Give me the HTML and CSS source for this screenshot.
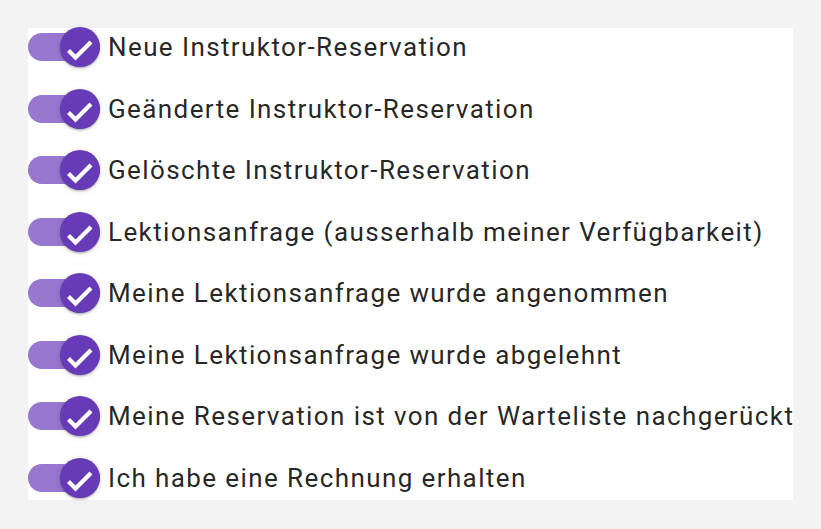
FILE: index.html
```
<!DOCTYPE html>
<html lang="de">
<head>
<meta charset="utf-8">
<link rel="stylesheet" href="styles.css">
</head>
<body>
<div class="panel">
  <div class="row"><span class="toggle"><span class="track"></span><span class="thumb"><svg viewBox="0 0 40 40"><polyline points="8.5,23.5 15.5,30.5 31,15"/></svg></span></span><span class="label">Neue Instruktor-Reservation</span></div>
  <div class="row"><span class="toggle"><span class="track"></span><span class="thumb"><svg viewBox="0 0 40 40"><polyline points="8.5,23.5 15.5,30.5 31,15"/></svg></span></span><span class="label">Geänderte Instruktor-Reservation</span></div>
  <div class="row"><span class="toggle"><span class="track"></span><span class="thumb"><svg viewBox="0 0 40 40"><polyline points="8.5,23.5 15.5,30.5 31,15"/></svg></span></span><span class="label">Gelöschte Instruktor-Reservation</span></div>
  <div class="row"><span class="toggle"><span class="track"></span><span class="thumb"><svg viewBox="0 0 40 40"><polyline points="8.5,23.5 15.5,30.5 31,15"/></svg></span></span><span class="label">Lektionsanfrage (ausserhalb meiner Verfügbarkeit)</span></div>
  <div class="row"><span class="toggle"><span class="track"></span><span class="thumb"><svg viewBox="0 0 40 40"><polyline points="8.5,23.5 15.5,30.5 31,15"/></svg></span></span><span class="label">Meine Lektionsanfrage wurde angenommen</span></div>
  <div class="row"><span class="toggle"><span class="track"></span><span class="thumb"><svg viewBox="0 0 40 40"><polyline points="8.5,23.5 15.5,30.5 31,15"/></svg></span></span><span class="label">Meine Lektionsanfrage wurde abgelehnt</span></div>
  <div class="row"><span class="toggle"><span class="track"></span><span class="thumb"><svg viewBox="0 0 40 40"><polyline points="8.5,23.5 15.5,30.5 31,15"/></svg></span></span><span class="label">Meine Reservation ist von der Warteliste nachgerückt</span></div>
  <div class="row"><span class="toggle"><span class="track"></span><span class="thumb"><svg viewBox="0 0 40 40"><polyline points="8.5,23.5 15.5,30.5 31,15"/></svg></span></span><span class="label">Ich habe eine Rechnung erhalten</span></div>
</div>
</body>
</html>
```
FILE: styles.css
```
html, body {
  margin: 0;
  padding: 0;
  background: #f3f3f3;
}
body {
  padding: 28px;
  font-family: Roboto, "Liberation Sans", sans-serif;
}
.panel {
  background: #ffffff;
  width: 765px;
  height: 472px;
  display: flex;
  flex-direction: column;
  gap: 21.57px;
  box-sizing: border-box;
}
.row {
  display: flex;
  align-items: center;
  height: 40px;
  flex: none;
}
.row:first-child {
  margin-top: -1px;
}
.toggle {
  position: relative;
  width: 72px;
  height: 40px;
  flex: none;
  display: flex;
  align-items: center;
}
.track {
  width: 72px;
  height: 28px;
  border-radius: 14px;
  background: #9877cf;
}
.thumb {
  position: absolute;
  right: 0;
  top: 0;
  width: 40px;
  height: 40px;
  border-radius: 50%;
  background: #673ab7;
  box-shadow: 0 2px 2px -1px rgba(0,0,0,.2), 0 1px 2px 0 rgba(0,0,0,.14), 0 1px 6px 0 rgba(0,0,0,.12);
}
.thumb svg {
  display: block;
  width: 40px;
  height: 40px;
  fill: none;
  stroke: #ffffff;
  stroke-width: 4.2;
  stroke-linecap: butt;
  stroke-linejoin: miter;
}
.label {
  padding-left: 8px;
  font-size: 26px;
  color: rgba(0, 0, 0, 0.87);
  white-space: nowrap;
  letter-spacing: 1.4px;
}
```
